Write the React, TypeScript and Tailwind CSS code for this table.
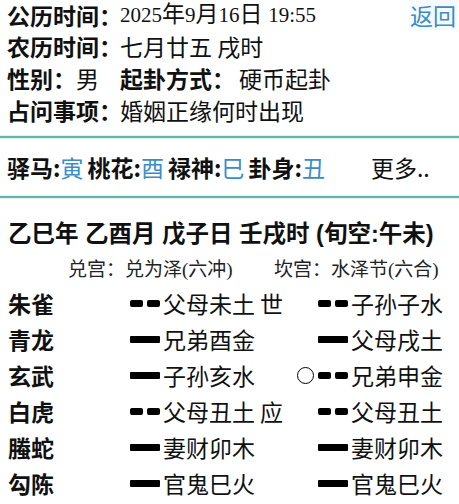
import React from 'react';

type Line = 'yang' | 'yin';

interface Yao {
  kind: Line;
  text: string;
  mark?: string;
  moving?: boolean;
}

const rows: { god: string; left: Yao; right: Yao }[] = [
  { god: '朱雀', left: { kind: 'yin', text: '父母未土', mark: '世' }, right: { kind: 'yin', text: '子孙子水' } },
  { god: '青龙', left: { kind: 'yang', text: '兄弟酉金' }, right: { kind: 'yang', text: '父母戌土' } },
  { god: '玄武', left: { kind: 'yang', text: '子孙亥水' }, right: { kind: 'yin', text: '兄弟申金', moving: true } },
  { god: '白虎', left: { kind: 'yin', text: '父母丑土', mark: '应' }, right: { kind: 'yin', text: '父母丑土' } },
  { god: '螣蛇', left: { kind: 'yang', text: '妻财卯木' }, right: { kind: 'yang', text: '妻财卯木' } },
  { god: '勾陈', left: { kind: 'yang', text: '官鬼巳火' }, right: { kind: 'yang', text: '官鬼巳火' } },
];

const shensha = [
  { label: '驿马', value: '寅' },
  { label: '桃花', value: '酉' },
  { label: '禄神', value: '巳' },
  { label: '卦身', value: '丑' },
];

function YaoLine({ kind }: { kind: Line }) {
  if (kind === 'yang') return <div className="w-[30px] h-[7px] bg-black rounded-[1px]" />;
  return (
    <div className="flex gap-[4px]">
      <div className="w-[13px] h-[7px] bg-black rounded-[2px]" />
      <div className="w-[13px] h-[7px] bg-black rounded-[2px]" />
    </div>
  );
}

function YaoCell({ yao }: { yao: Yao }) {
  return (
    <div className="flex items-center whitespace-nowrap">
      <YaoLine kind={yao.kind} />
      <span className="ml-[3px]">{yao.text}</span>
      {yao.mark && <span className="ml-[5px]">{yao.mark}</span>}
    </div>
  );
}

function Separator() {
  return <div className="h-[2px] bg-[#5fb6a4] shadow-[0_-1px_0_#e2f2ee,0_1px_0_#e2f2ee]" />;
}

export default function App() {
  return (
    <div className="w-[459px] h-[504px] overflow-hidden bg-white text-[#111] whitespace-nowrap font-['Noto_Sans_CJK_SC',sans-serif]">
      {/* basic info */}
      <div className="pl-[7px] text-[23px] leading-[32px]">
        <div className="flex items-center h-[30px] leading-[30px]">
          <span className="w-[113px] shrink-0 font-bold">公历时间：</span>
          <span className="font-['Liberation_Serif','Noto_Sans_CJK_SC',serif]">
            <span className="text-[21px]">2025</span>年<span className="text-[21px]">9</span>月
            <span className="text-[21px]">16</span>日 <span className="text-[21px]">19:55</span>
          </span>
          <span className="ml-auto mr-[2px] px-[1px] bg-[#f6fafd] text-[#3a8dc5]">返回</span>
        </div>
        <div className="flex">
          <span className="w-[113px] shrink-0 font-bold">农历时间：</span>
          <span>七月廿五 戌时</span>
        </div>
        <div className="flex">
          <span className="w-[113px] shrink-0">
            <span className="font-bold">性别：</span>男
          </span>
          <span className="font-bold">起卦方式：</span>
          <span className="ml-[4px]">硬币起卦</span>
        </div>
        <div className="flex">
          <span className="w-[113px] shrink-0 font-bold">占问事项：</span>
          <span>婚姻正缘何时出现</span>
        </div>
      </div>

      <div className="mt-[10px]">
        <Separator />
      </div>

      {/* shensha */}
      <div className="h-[58px] flex items-center pl-[7px] text-[23px] leading-[32px]">
        <div className="flex gap-[4px]">
          {shensha.map(s => (
            <span key={s.label}>
              <span className="font-bold">{s.label}:</span>
              <span className="text-[#3a8dc5]">{s.value}</span>
            </span>
          ))}
        </div>
        <span className="ml-[46px]">更多..</span>
      </div>

      <Separator />

      {/* ganzhi */}
      <div className="pt-[20px] pl-[8px] text-[23.5px] leading-[32px] font-bold font-['Liberation_Sans','Noto_Sans_CJK_SC',sans-serif]">
        乙巳年 乙酉月 戊子日 壬戌时 (旬空:午未)
      </div>

      {/* gua names */}
      <div className="mt-[8px] flex text-[19px] leading-[24px] text-[#222] font-['Liberation_Serif','Noto_Sans_CJK_SC',serif]">
        <span className="w-[274px] shrink-0 pl-[68px]">兑宫：兑为泽(六冲)</span>
        <span>坎宫：水泽节(六合)</span>
      </div>

      {/* yao rows */}
      <div className="mt-[3px] text-[23px] leading-[32px]">
        {rows.map(r => (
          <div key={r.god} className="h-[36px] flex items-center pl-[8px]">
            <span className="w-[102px] shrink-0 font-bold">{r.god}</span>
            <div className="w-[20px] shrink-0" />
            <div className="w-[167px] shrink-0">
              <YaoCell yao={r.left} />
            </div>
            <div className="w-[21px] shrink-0 flex items-center">
              {r.right.moving && <div className="w-[17px] h-[17px] rounded-full border border-black" />}
            </div>
            <YaoCell yao={r.right} />
          </div>
        ))}
      </div>
    </div>
  );
}
